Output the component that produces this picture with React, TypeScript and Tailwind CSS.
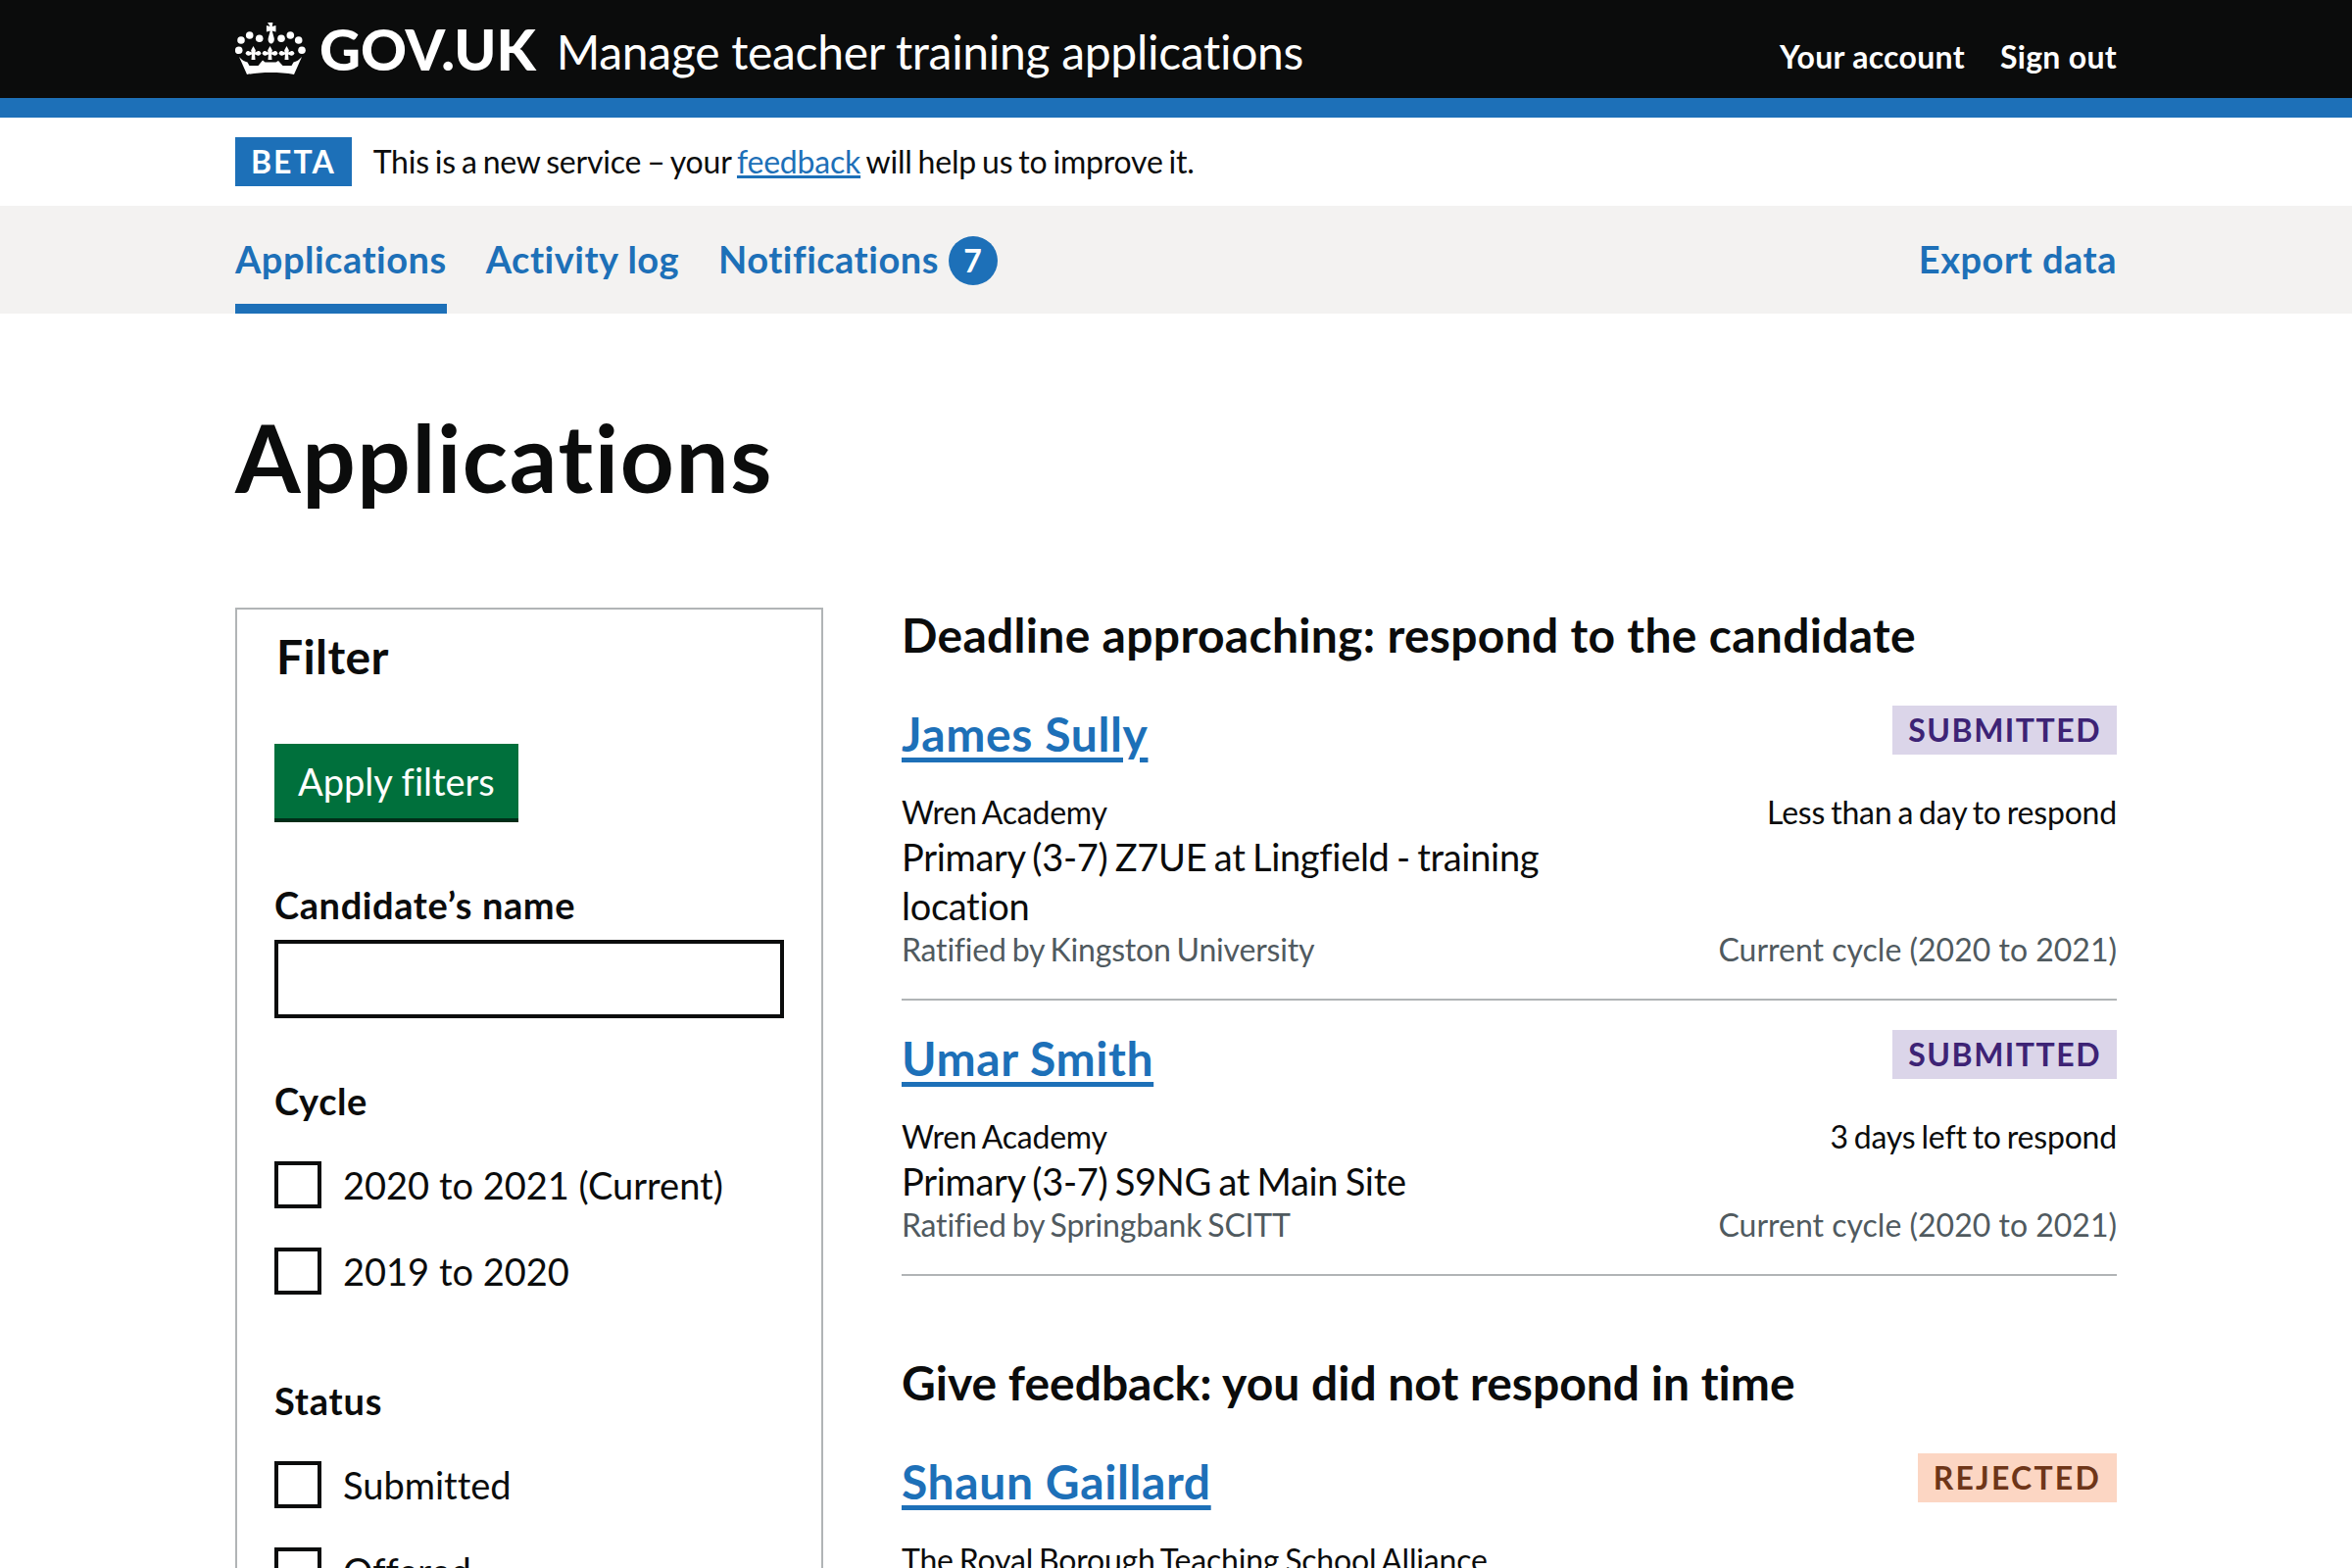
const font = "font-['Lato','Liberation_Sans',sans-serif]";
const small = "text-[32px] leading-[40px] tracking-[-0.2px] [word-spacing:-2px]";

function Fleur({ x, y }: { x: number; y: number }) {
  return (
    <path
      transform={`translate(${x} ${y})`}
      d="M0-8 2.2-4C2.6-2.8 2-2 1.5-1.400L5-3c1.400-.4 2.400.6 3 2.500-1 1.600-2.200 2.600-3.400 2.200L1.600.6 2 6h-4l.4-5.400-3 1.100C-5.800 2.100-7 1.100-8-.5-7.400-2.400-6.400-3.400-5-3l3.500 1.600C-2-2-2.600-2.800-2.200-4z"
    />
  );
}

function Crown() {
  const dots = [
    [14, 27],
    [22.7, 22],
    [32.7, 25.3],
    [55, 25.3],
    [64.3, 22],
    [72.7, 27],
    [11.7, 37.3],
    [76, 37.3]
  ];
  return (
    <svg viewBox="8 8 72 56" className="h-[56px] w-[72px] shrink-0 text-white" fill="currentColor" aria-hidden>
      {dots.map(([cx, cy]) => (
        <circle key={`${cx}-${cy}`} cx={cx} cy={cy} r="3.8" />
      ))}
      <path d="M41 9h5.400l-.7 4 3.800-1v6.400l-3.800-1 2 7.600c.6 3-1.200 5.500-3 5.500s-3.600-2.500-3-5.500l2-7.600-3.800 1V12l3.800 1z" />
      <Fleur x={26.5} y={41} />
      <Fleur x={43.5} y={41} />
      <Fleur x={60.5} y={41} />
      <path d="M20 62c14-2.600 34-2.600 48 0l8-18c-2.600 3-5.500 5-8.500 5.500l-2 3.500h-9l-4.500-5-2.500 1.600h-11L36 47.500 31.500 53h-9l-2-3.500c-3-.5-6-2.500-8.500-5.500z" />
    </svg>
  );
}

function Tag({ label, tone }: { label: string; tone: "submitted" | "rejected" }) {
  const cls = tone === "submitted" ? "bg-[#dbd5e9] text-[#3d2375] tracking-[1.5px]" : "bg-[#fcd6c3] text-[#6e3619] tracking-[2.2px]";
  return (
    <strong className={`flex h-[50px] shrink-0 items-center px-4 text-[32px] leading-none font-bold ${cls}`}>
      {label}
    </strong>
  );
}

function Check({ label }: { label: string }) {
  return (
    <label className="flex h-[48px] items-center gap-[22px]">
      <span className="h-12 w-12 shrink-0 border-4 border-[#0b0c0c] bg-white" />
      <span className="text-[38px] leading-[48px]">{label}</span>
    </label>
  );
}

function Application({
  name,
  status,
  tone,
  provider,
  course,
  ratified,
  due,
  divider = true
}: {
  name: string;
  status: string;
  tone: "submitted" | "rejected";
  provider: string;
  course: string;
  ratified?: string;
  due?: string;
  divider?: boolean;
}) {
  return (
    <div className={divider ? "mb-[30px] border-b-2 border-[#b1b4b6] pb-[30px]" : ""}>
      <div className="flex items-start justify-between">
        <a href="#" className="mt-[-1px] text-[48px] leading-[60px] font-bold tracking-[0.6px] text-[#1d70b8] underline decoration-[5px] underline-offset-[6px]">
          {name}
        </a>
        <Tag label={status} tone={tone} />
      </div>
      <div className="mt-[30px] flex items-stretch justify-between">
        <div className="w-[700px]">
          <p className={small}>{provider}</p>
          {course && <p className="text-[38px] leading-[50px] tracking-[-0.3px] [word-spacing:-2px]">{course}</p>}
          {ratified && <p className={`${small} text-[#505a5f]`}>{ratified}</p>}
        </div>
        {due && (
          <div className="flex flex-col justify-between text-right text-[32px] leading-[40px]">
            <p className="tracking-[-0.2px] [word-spacing:-2px]">{due}</p>
            <p className="text-[#505a5f]">Current cycle (2020 to 2021)</p>
          </div>
        )}
      </div>
    </div>
  );
}

export default function App() {
  return (
    <div className={`h-[1600px] overflow-hidden bg-white text-[#0b0c0c] [font-variant-ligatures:none] ${font}`}>
      <header className="h-[120px] border-b-[20px] border-[#1d70b8] bg-[#0b0c0c] text-white">
        <div className="mx-auto flex h-[100px] w-[1920px] items-center justify-between">
          <div className="flex items-center">
            <Crown />
            <span className="ml-[14px] text-[58px] leading-none font-black">GOV.UK</span>
            <span className="ml-[21px] pt-[5px] text-[48px] leading-none tracking-[-0.3px]">Manage teacher training applications</span>
          </div>
          <div className="flex gap-[36px] pt-[16px] text-[32px] leading-10 font-bold tracking-[0.3px]">
            <a href="#">Your account</a>
            <a href="#">Sign out</a>
          </div>
        </div>
      </header>

      <div className="mx-auto flex h-[90px] w-[1920px] items-center">
        <strong className="flex h-[50px] items-center bg-[#1d70b8] px-4 text-[32px] leading-none font-bold tracking-[2px] text-white">BETA</strong>
        <p className={`ml-[22px] ${small}`}>
          This is a new service – your <a href="#" className="text-[#1d70b8] underline">feedback</a> will help us to improve it.
        </p>
      </div>

      <nav className="h-[110px] bg-[#f3f2f1]">
        <div className="mx-auto flex h-full w-[1920px] items-stretch justify-between text-[38px] font-bold tracking-[0.5px] text-[#1d70b8]">
          <div className="flex gap-[40px]">
            <a href="#" className="flex items-center border-b-[10px] border-[#1d70b8] pt-[8px]">Applications</a>
            <a href="#" className="flex items-center border-b-[10px] border-transparent pt-[8px]">Activity log</a>
            <a href="#" className="flex items-center gap-[10px] border-b-[10px] border-transparent pt-[8px]">
              Notifications
              <span className="mt-[3px] flex h-[50px] w-[50px] items-center justify-center rounded-full bg-[#1d70b8] text-[32px] text-white">7</span>
            </a>
          </div>
          <a href="#" className="flex items-center border-b-[10px] border-transparent pt-[8px]">Export data</a>
        </div>
      </nav>

      <main className="mx-auto w-[1920px] pt-[86px]">
        <h1 className="text-[96px] leading-[120px] font-bold tracking-[1.6px]">Applications</h1>
        <div className="mt-[94px] flex gap-[80px]">
          <aside className="w-[600px] shrink-0 border-2 border-[#b1b4b6] px-[38px] pt-[18px] pb-[40px]">
            <h2 className="ml-[2px] text-[48px] leading-[60px] font-bold tracking-[0.4px]">Filter</h2>
            <button className="mt-[59px] block h-[80px] border-b-4 border-[#002d18] bg-[#00703c] px-[24px] text-[38px] text-white">Apply filters</button>
            <label className="mt-[59px] block text-[38px] leading-[50px] font-bold tracking-[0.6px]">Candidate’s name</label>
            <input className="mt-[11px] block h-[80px] w-[520px] border-4 border-[#0b0c0c]" />
            <h3 className="mt-[59px] text-[38px] leading-[50px] font-bold tracking-[0.6px]">Cycle</h3>
            <div className="mt-[37px] flex flex-col gap-[40px]">
              <Check label="2020 to 2021 (Current)" />
              <Check label="2019 to 2020" />
            </div>
            <h3 className="mt-[83px] text-[38px] leading-[50px] font-bold tracking-[0.8px]">Status</h3>
            <div className="mt-[37px] flex flex-col gap-[40px]">
              <Check label="Submitted" />
              <Check label="Offered" />
            </div>
          </aside>

          <section className="min-w-0 flex-1">
            <h2 className="text-[48px] leading-[56px] font-bold tracking-[0.3px]">Deadline approaching: respond to the candidate</h2>
            <div className="mt-[44px]">
              <Application name="James Sully" status="SUBMITTED" tone="submitted" provider="Wren Academy" course="Primary (3-7) Z7UE at Lingfield - training location" ratified="Ratified by Kingston University" due="Less than a day to respond" />
              <Application name="Umar Smith" status="SUBMITTED" tone="submitted" provider="Wren Academy" course="Primary (3-7) S9NG at Main Site" ratified="Ratified by Springbank SCITT" due="3 days left to respond" />
            </div>
            <h2 className="mt-[81px] text-[48px] leading-[56px] font-bold">Give feedback: you did not respond in time</h2>
            <div className="mt-[44px]">
              <Application name="Shaun Gaillard" status="REJECTED" tone="rejected" provider="The Royal Borough Teaching School Alliance" course="" divider={false} />
            </div>
          </section>
        </div>
      </main>
    </div>
  );
}
